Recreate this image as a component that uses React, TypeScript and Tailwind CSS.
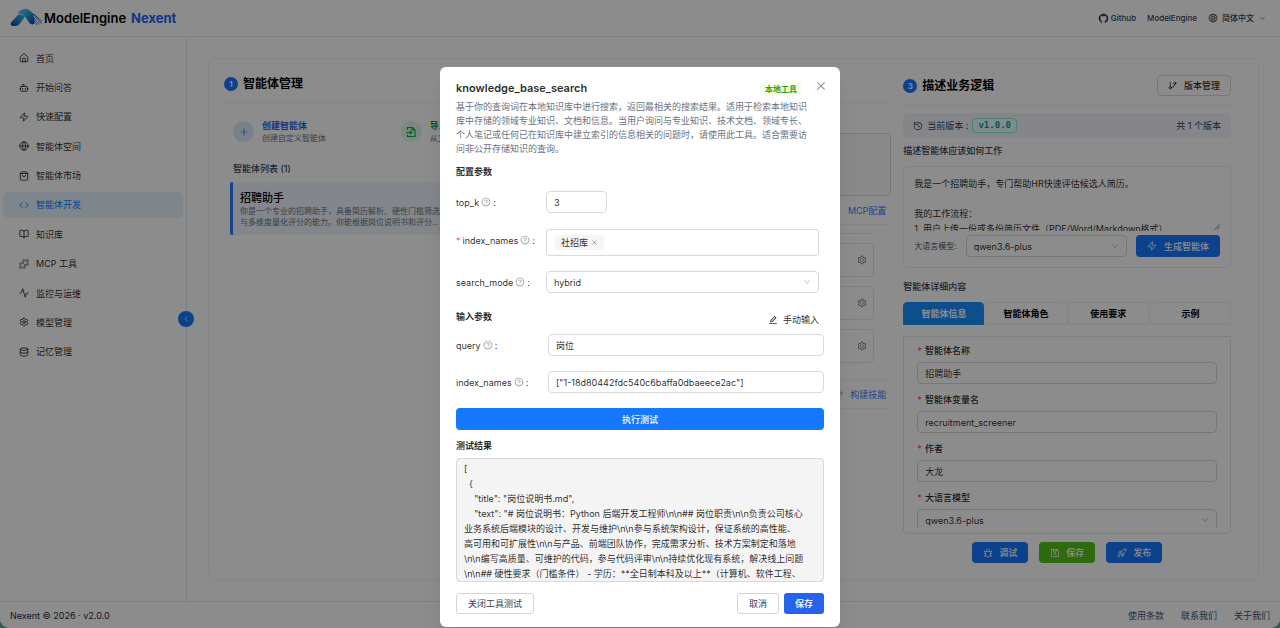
import { useState } from 'react'
import type { ReactNode } from 'react'
import {
  Activity,
  BookOpen,
  Bot,
  ChevronDown,
  ChevronLeft,
  Code,
  Database,
  GitBranch,
  Globe,
  History,
  House,
  Rocket,
  Settings,
  ShoppingBag,
  Zap,
} from 'lucide-react'
import {
  AiOutlineApi,
  AiOutlineBug,
  AiOutlineBuild,
  AiOutlineClose,
  AiOutlineDown,
  AiOutlineEdit,
  AiOutlineGithub,
  AiOutlineGlobal,
  AiOutlinePlus,
  AiOutlineQuestionCircle,
  AiOutlineSave,
  AiOutlineSetting,
} from 'react-icons/ai'

// 斜放的拼图图标
function PuzzleIcon({ className }: { className?: string }) {
  return (
    <svg viewBox="0 0 24 24" className={className} fill="none" stroke="currentColor" strokeWidth="2" strokeLinejoin="round">
      <path d="M19.439 7.85c-.049.322.059.648.289.878l1.568 1.568c.47.47.706 1.087.706 1.704s-.235 1.233-.706 1.704l-1.611 1.611a.98.98 0 0 1-.837.276c-.47-.07-.802-.48-.968-.925a2.501 2.501 0 1 0-3.214 3.214c.446.166.855.497.925.968a.979.979 0 0 1-.276.837l-1.61 1.61a2.404 2.404 0 0 1-1.705.707 2.402 2.402 0 0 1-1.704-.706l-1.568-1.568a1.026 1.026 0 0 0-.877-.29c-.493.074-.84.504-1.02.968a2.5 2.5 0 1 1-3.237-3.237c.464-.18.894-.527.967-1.02a1.026 1.026 0 0 0-.289-.877l-1.568-1.568A2.402 2.402 0 0 1 1.998 12c0-.617.236-1.234.706-1.704L4.23 8.77c.24-.24.581-.353.917-.303.515.077.877.528 1.073 1.01a2.5 2.5 0 1 0 3.259-3.259c-.482-.196-.933-.558-1.01-1.073-.05-.336.062-.676.303-.917l1.525-1.525A2.402 2.402 0 0 1 12 1.998c.617 0 1.234.236 1.704.706l1.568 1.568c.23.23.556.338.877.29.493-.074.84-.504 1.02-.968a2.5 2.5 0 1 1 3.237 3.237c-.464.18-.894.527-.967 1.02Z" />
    </svg>
  )
}

const NAV_ITEMS = [
  { label: '首页', icon: House },
  { label: '开始问答', icon: Bot },
  { label: '快速配置', icon: Zap },
  { label: '智能体空间', icon: Globe },
  { label: '智能体市场', icon: ShoppingBag },
  { label: '智能体开发', icon: Code },
  { label: '知识库', icon: BookOpen },
  { label: 'MCP 工具', icon: PuzzleIcon },
  { label: '监控与运维', icon: Activity },
  { label: '模型管理', icon: Settings },
  { label: '记忆管理', icon: Database },
]

const TABS = ['智能体信息', '智能体角色', '使用要求', '示例']

const TOOL_DESC = [
  '基于你的查询词在本地知识库中进行搜索，返回最相关的搜索结果。适用于检索本地知识',
  '库中存储的领域专业知识、文档和信息。当用户询问与专业知识、技术文档、领域专长、',
  '个人笔记或任何已在知识库中建立索引的信息相关的问题时，请使用此工具。适合需要访',
  '问非公开存储知识的查询。',
].join('\n')

const RESULT = [
  '[',
  '  {',
  '    "title": "岗位说明书.md",',
  '    "text": "# 岗位说明书：Python 后端开发工程师\\n\\n## 岗位职责\\n\\n负责公司核心',
  '业务系统后端模块的设计、开发与维护\\n\\n参与系统架构设计，保证系统的高性能、',
  '高可用和可扩展性\\n\\n与产品、前端团队协作，完成需求分析、技术方案制定和落地',
  '\\n\\n编写高质量、可维护的代码，参与代码评审\\n\\n持续优化现有系统，解决线上问题',
  '\\n\\n## 硬性要求（门槛条件） - 学历：**全日制本科及以上**（计算机、软件工程、',
].join('\n')

const DUTY = '我是一个招聘助手，专门帮助HR快速评估候选人简历。\n\n我的工作流程：\n1. 用户上传一份或多份简历文件（PDF/Word/Markdown格式）'

function Logo() {
  return (
    <svg viewBox="0 0 32 18" className="h-[18px] w-8" fill="none" aria-hidden="true">
      <defs>
        <linearGradient id="leg" x1="0" y1="1" x2="1" y2="0">
          <stop offset="0" stopColor="#0b3f9c" />
          <stop offset="0.5" stopColor="#1b86d8" />
          <stop offset="1" stopColor="#35c3e0" />
        </linearGradient>
        <linearGradient id="arc" x1="0" y1="0" x2="1" y2="1">
          <stop offset="0" stopColor="#5fe0ee" />
          <stop offset="0.5" stopColor="#2a9be0" />
          <stop offset="1" stopColor="#12379c" />
        </linearGradient>
      </defs>
      <path d="M7 5C11-1.500 18-1 21 2.500L23 5L25 13C24.500 16 21 16 19.500 14L15 7.500C13 4.500 10 4 7 5Z" fill="url(#arc)" />
      <path d="M1.500 13L7 7C9 5 13 5 15 7.500L10 14.500C8 17.500 3 17.500 1.500 16.500C0.500 15.500 0.500 14 1.500 13Z" fill="url(#leg)" />
      <path d="M22 4L31.500 14.500M23 8L29.500 15.500M23 11L27 16M24 5L32 12.500" stroke="#1d62c4" strokeWidth="0.9" />
    </svg>
  )
}

// 标题前的蓝色序号
function StepTitle({ step, title }: { step: number; title: string }) {
  return (
    <h2 className="flex items-center gap-[5px] text-[12px] font-semibold text-black">
      <span className="grid size-[14px] place-items-center rounded-full bg-[#1677ff] text-[8px] text-white">{step}</span>
      {title}
    </h2>
  )
}

function Select({ id, value, className }: { id: string; value: string; className?: string }) {
  return (
    <div className={`relative ${className ?? ''}`}>
      <select
        id={id}
        defaultValue={value}
        className="h-[22px] w-full appearance-none rounded border border-[#d9d9d9] bg-white px-[7px] outline-none"
      >
        <option>{value}</option>
      </select>
      <AiOutlineDown className="pointer-events-none absolute top-[7px] right-2 size-2 text-[#bfbfbf]" />
    </div>
  )
}

function Field({ id, label, children }: { id: string; label: string; children: ReactNode }) {
  return (
    <div className="mb-2">
      <label htmlFor={id} className="mb-1 flex h-[15px] items-center gap-[3px] font-medium">
        <span className="text-[#ff4d4f]">*</span>
        {label}
      </label>
      {children}
    </div>
  )
}

// 弹窗里的参数名 + 问号提示
function ParamLabel({ id, text, required }: { id: string; text: string; required?: boolean }) {
  return (
    <label htmlFor={id} className="flex h-[22px] w-[90px] shrink-0 items-center gap-[2px]">
      {required && <span className="text-[#ff4d4f]">*</span>}
      {text}
      <AiOutlineQuestionCircle className="size-[10px] text-[#8c8c8c]" />:
    </label>
  )
}

function Header() {
  return (
    <header className="flex h-[37px] items-center justify-between border-b border-slate-200 pr-[14px] pl-[10px]">
      <div className="flex items-center gap-[2px]">
        <Logo />
        <span className="text-[13px] font-semibold text-black">ModelEngine</span>
        <span className="ml-[3px] text-[13px] font-bold text-[#2563eb]">Nexent</span>
      </div>
      <nav className="flex items-center gap-[11px] text-[8px] font-medium text-slate-700">
        <a href="#github" className="flex items-center gap-[2px]">
          <AiOutlineGithub className="size-[11px]" />
          Github
        </a>
        <a href="#modelengine">ModelEngine</a>
        <button className="flex items-center gap-1">
          <AiOutlineGlobal className="size-[10px]" />
          简体中文
          <ChevronDown className="ml-px size-[7px]" />
        </button>
      </nav>
    </header>
  )
}

function Sidebar() {
  return (
    <aside className="relative w-[187px] shrink-0 border-r border-slate-200 pt-2 pr-[3px] pl-[3px]">
      <nav className="grid h-[320px] auto-rows-fr gap-[3px]">
        {NAV_ITEMS.map(({ label, icon: Icon }) => (
          <a
            key={label}
            href="#nav"
            className={`flex items-center gap-[7px] rounded-[5px] pl-4 ${
              label === '智能体开发' ? 'bg-[#e6f4ff] text-[#1677ff]' : 'text-black/85'
            }`}
          >
            <Icon className="size-[10px]" />
            {label}
          </a>
        ))}
      </nav>
      <button
        aria-label="收起"
        className="absolute top-[274px] -right-2 grid size-4 place-items-center rounded-full bg-[#1677ff] text-white"
      >
        <ChevronLeft className="size-2" />
      </button>
    </aside>
  )
}

function AgentColumn() {
  return (
    <section>
      <div className="flex h-[44px] items-center border-b border-gray-100 pt-[6px]">
        <StepTitle step={1} title="智能体管理" />
      </div>
      <div className="mt-4 grid grid-cols-2 gap-2">
        <button className="flex items-center gap-2 pl-[9px] text-left">
          <span className="grid size-[21px] place-items-center rounded-full bg-blue-100 text-[#2563eb]">
            <AiOutlinePlus className="size-[10px]" />
          </span>
          <span>
            <span className="block leading-[13px] font-semibold text-[#2563eb]">创建智能体</span>
            <span className="block text-[8px] leading-[12px] text-gray-500">创建自定义智能体</span>
          </span>
        </button>
        <button className="flex items-center gap-2 pl-[9px] text-left">
          <span className="grid size-[21px] place-items-center rounded-full bg-green-100 text-[#16a34a]">
            <svg viewBox="0 0 24 24" className="size-[12px]" fill="none" stroke="currentColor" strokeWidth="2.2">
              <path d="M5 8V3h10l5 5v13H5v-4" />
              <path d="M14 3v5h6M2 13h11M10 9.500l3.500 3.500-3.500 3.500" />
            </svg>
          </span>
          <span>
            <span className="block leading-[13px] font-semibold text-[#16a34a]">导入智能体</span>
            <span className="block text-[8px] leading-[12px] text-gray-500">从文件导入</span>
          </span>
        </button>
      </div>
      <h3 className="mt-[17px] pl-[9px] leading-[15px] font-medium text-gray-700">智能体列表 (1)</h3>
      <article className="mt-[6px] ml-[6px] rounded-l-[2px] border-l-[3px] border-blue-500 bg-blue-50 pt-[9px] pb-[7px] pl-[7px]">
        <h4 className="text-[11px] leading-[15px] font-medium text-black">招聘助手</h4>
        <p className="text-[8px] leading-[11px] whitespace-pre-line text-gray-500">
          {'你是一个专业的招聘助手，具备简历解析、硬性门槛筛选\n与多维度量化评分的能力。你能根据岗位说明书和评分...'}
        </p>
      </article>
    </section>
  )
}

function ToolColumn() {
  return (
    <section>
      <div className="h-[44px] border-b border-gray-100" />
      <div className="mt-[30px] h-[63px] rounded border border-[#d9d9d9] bg-[#fafafa]" />
      <div className="flex h-[29px] items-center justify-end border-b border-gray-100 pr-[5px]">
        <button className="flex items-center gap-[7px] text-[#3b82f6]">
          <AiOutlineApi className="size-[9px]" />
          MCP配置
        </button>
      </div>
      <div className="h-[154px] overflow-hidden pr-[17px]">
        <div className="mb-[9px] h-[9px] rounded-b border-b border-gray-200" />
        {[0, 1, 2].map((i) => (
          <div key={i} className="mb-[9px] flex h-[34px] items-center justify-end rounded border border-gray-200 pr-[6px]">
            <button aria-label="设置">
              <AiOutlineSetting className="size-[10px] text-gray-500" />
            </button>
          </div>
        ))}
      </div>
      <div className="flex h-[30px] items-center justify-end border-y border-gray-100 pr-[5px]">
        <button className="flex items-center gap-[7px] text-[#3b82f6]">
          <AiOutlineBuild className="size-[9px]" />
          构建技能
        </button>
      </div>
    </section>
  )
}

function LogicColumn() {
  const [tab, setTab] = useState(0)
  const inputClass = 'h-[22px] w-full rounded border border-[#d9d9d9] bg-white px-[7px] outline-none'

  return (
    <section className="pt-4">
      <div className="flex items-center justify-between border-b border-gray-100 pb-[9px]">
        <StepTitle step={3} title="描述业务逻辑" />
        <button className="flex h-[21px] items-center gap-[7px] rounded border border-[#d9d9d9] px-[10px] font-medium">
          <GitBranch className="size-[9px]" />
          版本管理
        </button>
      </div>

      <div className="mt-[7px] flex h-[25px] items-center justify-between rounded-[5px] bg-[#f1f5f9] px-[10px] text-slate-700">
        <span className="flex items-center gap-1">
          <History className="size-[10px]" />
          当前版本 :
          <span className="rounded border border-[#87e8de] bg-[#e6fffb] px-[5px] font-['DejaVu_Sans_Mono'] leading-[13px] font-bold text-[#08979c]">
            v1.0.0
          </span>
        </span>
        <span>共 1 个版本</span>
      </div>

      <label htmlFor="duty" className="mt-[5px] block leading-[15px] font-medium text-gray-700">
        描述智能体应该如何工作
      </label>
      <div className="mt-2 rounded border border-[#ebedf0] px-[10px] pt-[9px] pb-[10px]">
        <div className="relative">
          <textarea
            id="duty"
            defaultValue={DUTY}
            className="block h-[55px] w-full resize-none overflow-hidden leading-[15px] outline-none"
          />
          <svg viewBox="0 0 6 6" className="absolute right-0 bottom-[1px] size-[6px]" stroke="#555" strokeWidth="0.7">
            <path d="M0.500 5.500L5.500 0.500M3 5.500L5.500 3" />
          </svg>
        </div>
        <div className="mt-1 flex items-center gap-[9px]">
          <label htmlFor="llm" className="text-[8px] text-gray-600">大语言模型:</label>
          <Select id="llm" value="qwen3.6-plus" className="flex-1" />
          <button className="flex h-[22px] items-center gap-[7px] rounded bg-[#1677ff] px-[11px] font-medium text-white">
            <Zap className="size-[10px]" />
            生成智能体
          </button>
        </div>
      </div>

      <h3 className="mt-[11px] leading-[15px] font-medium text-gray-700">智能体详细内容</h3>
      <div role="tablist" className="mt-2 grid grid-cols-4 gap-px">
        {TABS.map((name, i) => (
          <button
            key={name}
            role="tab"
            aria-selected={tab === i}
            onClick={() => setTab(i)}
            className={`h-[23px] rounded-t border font-semibold ${
              tab === i ? 'border-[#1890ff] bg-[#1890ff] text-white' : 'border-[#f0f0f0] text-black'
            }`}
          >
            {name}
          </button>
        ))}
      </div>

      <div className="mt-[11px] rounded-b border border-[#e5e7eb] px-[13px] pt-[6px] pb-[5px]">
        <div className="h-[185px] overflow-hidden">
          <Field id="name" label="智能体名称">
            <input id="name" defaultValue="招聘助手" className={inputClass} />
          </Field>
          <Field id="var" label="智能体变量名">
            <input id="var" defaultValue="recruitment_screener" className={inputClass} />
          </Field>
          <Field id="author" label="作者">
            <input id="author" defaultValue="大龙" className={inputClass} />
          </Field>
          <Field id="model" label="大语言模型">
            <Select id="model" value="qwen3.6-plus" />
          </Field>
        </div>
      </div>

      <div className="mt-2 flex justify-center gap-[11px] font-medium text-white">
        <button className="flex h-[21px] w-14 items-center justify-center gap-[6px] rounded bg-[#1677ff]">
          <AiOutlineBug className="size-[10px]" />
          调试
        </button>
        <button className="flex h-[21px] w-14 items-center justify-center gap-[6px] rounded bg-[#52c41a]">
          <AiOutlineSave className="size-[10px]" />
          保存
        </button>
        <button className="flex h-[21px] w-14 items-center justify-center gap-[6px] rounded bg-[#1677ff]">
          <Rocket className="size-[10px]" />
          发布
        </button>
      </div>
    </section>
  )
}

function ToolDialog() {
  const fieldClass = 'h-[22px] rounded border border-[#d9d9d9] px-[7px] outline-none'

  return (
    <div
      role="dialog"
      aria-modal="true"
      aria-labelledby="tool-title"
      className="relative h-fit w-[400px] rounded-[6px] bg-white px-4 pt-[14px] pb-[13px] shadow-xl"
    >
      <button aria-label="关闭" className="absolute top-[13px] right-[13px] text-[#8c8c8c]">
        <AiOutlineClose className="size-[12px]" />
      </button>
      <div className="flex items-center justify-between pr-[22px]">
        <h2 id="tool-title" className="text-[11px] leading-[15px] font-semibold text-black/85">knowledge_base_search</h2>
        <span className="rounded-[3px] bg-[#f6ffed] px-[5px] text-[8px] leading-[14px] font-bold text-[#389e0d]">本地工具</span>
      </div>
      <p className="mt-1 leading-[14px] whitespace-pre-line text-gray-500">{TOOL_DESC}</p>

      <h3 className="mt-2 leading-[15px] font-bold">配置参数</h3>
      <div className="mt-3 flex items-center">
        <ParamLabel id="top_k" text="top_k" />
        <input id="top_k" defaultValue="3" className={`${fieldClass} w-[61px]`} />
      </div>
      <div className="mt-4 flex items-start pr-[5px]">
        <ParamLabel id="kb" text="index_names" required />
        <div className="flex h-[27px] flex-1 items-center rounded-[3px] border border-[#d9d9d9] px-2">
          <span className="flex items-center gap-[3px] rounded-[3px] bg-[#f5f5f5] px-[6px] leading-[15px]">
            社招库
            <button aria-label="移除社招库">
              <AiOutlineClose className="size-[7px] text-[#8c8c8c]" />
            </button>
          </span>
          <input id="kb" className="min-w-0 flex-1 outline-none" />
        </div>
      </div>
      <div className="mt-[15px] flex items-center pr-[5px]">
        <ParamLabel id="mode" text="search_mode" />
        <Select id="mode" value="hybrid" className="flex-1" />
      </div>

      <div className="mt-4 flex h-[21px] justify-between pr-[5px]">
        <h3 className="leading-[15px] font-bold">输入参数</h3>
        <button className="flex items-center gap-[5px]">
          <AiOutlineEdit className="size-[10px]" />
          手动输入
        </button>
      </div>
      <div className="mt-1 flex items-center gap-[2px]">
        <ParamLabel id="query" text="query" />
        <input id="query" defaultValue="岗位" className={`${fieldClass} min-w-0 flex-1`} />
      </div>
      <div className="mt-[15px] flex items-center gap-[2px]">
        <ParamLabel id="names" text="index_names" />
        <input
          id="names"
          defaultValue={'["1-18d80442fdc540c6baffa0dbaeece2ac"]'}
          className={`${fieldClass} min-w-0 flex-1`}
        />
      </div>
      <button className="mt-[15px] h-[22px] w-full rounded bg-[#1677ff] font-medium text-white">执行测试</button>

      <label htmlFor="result" className="mt-2 block leading-[15px] font-bold">测试结果</label>
      <textarea
        id="result"
        readOnly
        defaultValue={RESULT}
        className="mt-[5px] block h-[124px] w-full resize-none overflow-hidden rounded border border-[#d9d9d9] bg-[#f4f4f4] px-[7px] pt-[2px] leading-[15px] whitespace-pre outline-none"
      />

      <div className="mt-[11px] flex gap-[5px] text-gray-700">
        <button className="mr-auto h-[21px] rounded-[3px] border border-gray-300 px-[11px]">关闭工具测试</button>
        <button className="h-[21px] rounded-[3px] border border-gray-300 px-[11px]">取消</button>
        <button className="h-[21px] rounded-[3px] bg-[#2563eb] px-[11px] font-medium text-white">保存</button>
      </div>
    </div>
  )
}

export default function App() {
  return (
    <div className="min-h-screen bg-[#2f5f50] font-[Inter,'Noto_Sans_CJK_SC',sans-serif] text-[9px] leading-[15px] text-black/85">
      <div className="relative flex min-h-screen flex-col overflow-hidden rounded-b-[10px] bg-white">
        <Header />
        <div className="flex flex-1">
          <Sidebar />
          <main className="min-w-0 flex-1 p-[21px]">
            <div className="grid grid-cols-3 gap-3 rounded-[6px] border border-gray-100 pr-[27px] pb-4 pl-[15px]">
              <AgentColumn />
              <ToolColumn />
              <LogicColumn />
            </div>
          </main>
        </div>
        <footer className="flex h-[27px] items-center justify-between border-t border-gray-200 px-[10px] text-slate-800">
          <span>Nexent © 2026 · v2.0.0</span>
          <nav className="flex gap-[17px] text-slate-600">
            <a href="#terms">使用条款</a>
            <a href="#contact">联系我们</a>
            <a href="#about">关于我们</a>
          </nav>
        </footer>

        {/* 遮罩 + 工具测试弹窗 */}
        <div className="absolute inset-0 flex justify-center bg-black/45 pt-[67px]">
          <ToolDialog />
        </div>
      </div>
    </div>
  )
}
